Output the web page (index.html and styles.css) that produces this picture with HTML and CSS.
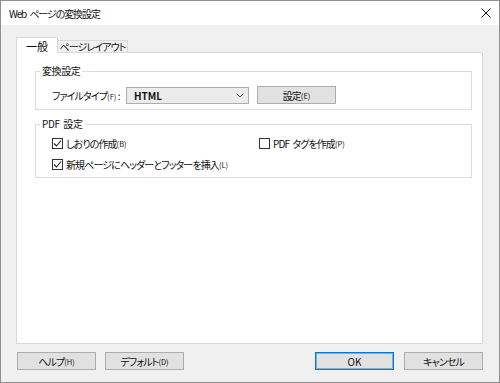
FILE: index.html
```html
<!DOCTYPE html>
<html lang="ja">
<head>
<meta charset="utf-8">
<title>Web ページの変換設定</title>
<link rel="stylesheet" href="styles.css">
</head>
<body>
<div class="window">
  <div class="titlebar">
    <span class="title">Web ページの変換設定</span>
    <svg class="close" width="10" height="10" viewBox="0 0 10 10"><path d="M0.5 0.5 L9.5 9.5 M9.5 0.5 L0.5 9.5" stroke="#111" stroke-width="1" fill="none"/></svg>
  </div>
  <div class="content">
    <div class="tabs">
      <div class="tab active">一般</div>
      <div class="tab">ページレイアウト</div>
    </div>
    <div class="panel">
      <fieldset class="group g1">
        <legend>変換設定</legend>
        <div class="row">
          <span class="label">ファイルタイプ<span class="key">(F)</span> :</span>
          <div class="select"><span>HTML</span>
            <svg class="chev" width="8" height="5" viewBox="0 0 8 5"><path d="M0.5 0.5 L4 4 L7.5 0.5" stroke="#555" stroke-width="1" fill="none"/></svg>
          </div>
          <div class="btn set">設定<span class="key">(E)</span></div>
        </div>
      </fieldset>
      <fieldset class="group g2">
        <legend>PDF 設定</legend>
        <div class="checks">
          <label class="check"><span class="box on"><svg width="9" height="9" viewBox="0 0 9 9"><path d="M1 4.5 L3.5 7 L8 1.5" stroke="#222" stroke-width="1.1" fill="none"/></svg></span>しおりの作成<span class="key">(B)</span></label>
          <label class="check"><span class="box"></span>PDF タグを作成<span class="key">(P)</span></label>
          <label class="check wide"><span class="box on"><svg width="9" height="9" viewBox="0 0 9 9"><path d="M1 4.5 L3.5 7 L8 1.5" stroke="#222" stroke-width="1.1" fill="none"/></svg></span>新規ページにヘッダーとフッターを挿入<span class="key">(L)</span></label>
        </div>
      </fieldset>
    </div>
    <div class="footer">
      <div class="btngroup left">
        <div class="btn">ヘルプ<span class="key">(H)</span></div>
        <div class="btn">デフォルト<span class="key">(D)</span></div>
      </div>
      <div class="btngroup right">
        <div class="btn default">OK</div>
        <div class="btn">キャンセル</div>
      </div>
    </div>
  </div>
</div>
</body>
</html>
```
FILE: styles.css
```css
html, body {
  margin: 0;
  padding: 0;
  background: #fff;
}
body {
  font-family: "Noto Sans CJK JP", "Noto Sans", sans-serif;
  font-size: 10px;
  letter-spacing: -0.9px;
  word-spacing: 2px;
  color: #111;
  font-feature-settings: "palt";
}
.window {
  width: 500px;
  height: 383px;
  box-sizing: border-box;
  border: 1px solid #8f8f8f;
  display: flex;
  flex-direction: column;
}
.titlebar {
  height: 24px;
  background: #fff;
  display: flex;
  align-items: center;
  justify-content: space-between;
  padding: 0 7px 0 8px;
  font-size: 10px;
  letter-spacing: -1.1px;
}
.close { margin-right: 1px; }
.content {
  flex: 1;
  background: #f0f0f0;
  padding: 12px 16px 0 15px;
  display: flex;
  flex-direction: column;
}
.tabs {
  display: flex;
  align-items: flex-end;
  height: 15px;
  position: relative;
  z-index: 1;
}
.tab {
  box-sizing: border-box;
  height: 12px;
  width: 71px;
  margin-left: -1px;
  border: 1px solid #d9d9d9;
  border-bottom: none;
  background: #f0f0f0;
  display: flex;
  align-items: center;
  justify-content: center;
  line-height: 10px;
  white-space: nowrap;
}
.tab.active {
  margin-left: 0;
  width: 42px;
  height: 16px;
  margin-bottom: -1px;
  background: #fff;
  z-index: 2;
  position: relative;
  font-size: 11px;
  letter-spacing: 0;
}
.panel {
  height: 292px;
  box-sizing: border-box;
  background: #fff;
  border: 1px solid #d9d9d9;
  padding: 11px 10px 0 18px;
}
.group {
  margin: 0;
  border: 1px solid #dcdcdc;
  padding: 0 4px;
  min-width: 0;
}
.group legend {
  padding: 0 2px;
  line-height: 14px;
  height: 14px;
  letter-spacing: -0.4px;
}
.g1 .row {
  display: flex;
  align-items: center;
  height: 18px;
  padding: 8px 0 5px 12px;
}
.label {
  width: 74px;
  flex: none;
  white-space: nowrap;
  word-spacing: 0;
}
.key {
  font-size: 7.5px;
  letter-spacing: 0;
}
.select {
  box-sizing: border-box;
  width: 123px;
  height: 17px;
  border: 1px solid #adadad;
  background: #ececec;
  display: flex;
  align-items: center;
  justify-content: space-between;
  padding: 0 4px 0 7px;
  margin-right: 8px;
  font-weight: 600;
  letter-spacing: 0;
}
.btn {
  box-sizing: border-box;
  width: 79px;
  height: 18px;
  background: #e1e1e1;
  border: 1px solid #adadad;
  display: flex;
  align-items: center;
  justify-content: center;
}
.btn.default {
  border: 1px solid #0078d7;
  box-shadow: inset 0 0 0 1px rgba(0, 120, 215, 0.45);
  letter-spacing: 0;
}
.g2 {
  margin-top: 7px;
}
.checks {
  display: grid;
  grid-template-columns: 207px 1fr;
  row-gap: 7px;
  padding: 5px 0 6px 12px;
}
.check {
  display: flex;
  align-items: center;
  height: 14px;
  white-space: nowrap;
}
.check.wide { grid-column: 1 / 3; }
.box {
  box-sizing: border-box;
  width: 11px;
  height: 11px;
  border: 1px solid #333;
  background: #fff;
  margin-right: 3px;
  display: flex;
  align-items: center;
  justify-content: center;
}
.footer {
  display: flex;
  justify-content: space-between;
  margin-top: 8px;
}
.btngroup {
  display: flex;
}
.btngroup.left { gap: 9px; margin-left: 1px; }
.btngroup.right { gap: 10px; }
```
